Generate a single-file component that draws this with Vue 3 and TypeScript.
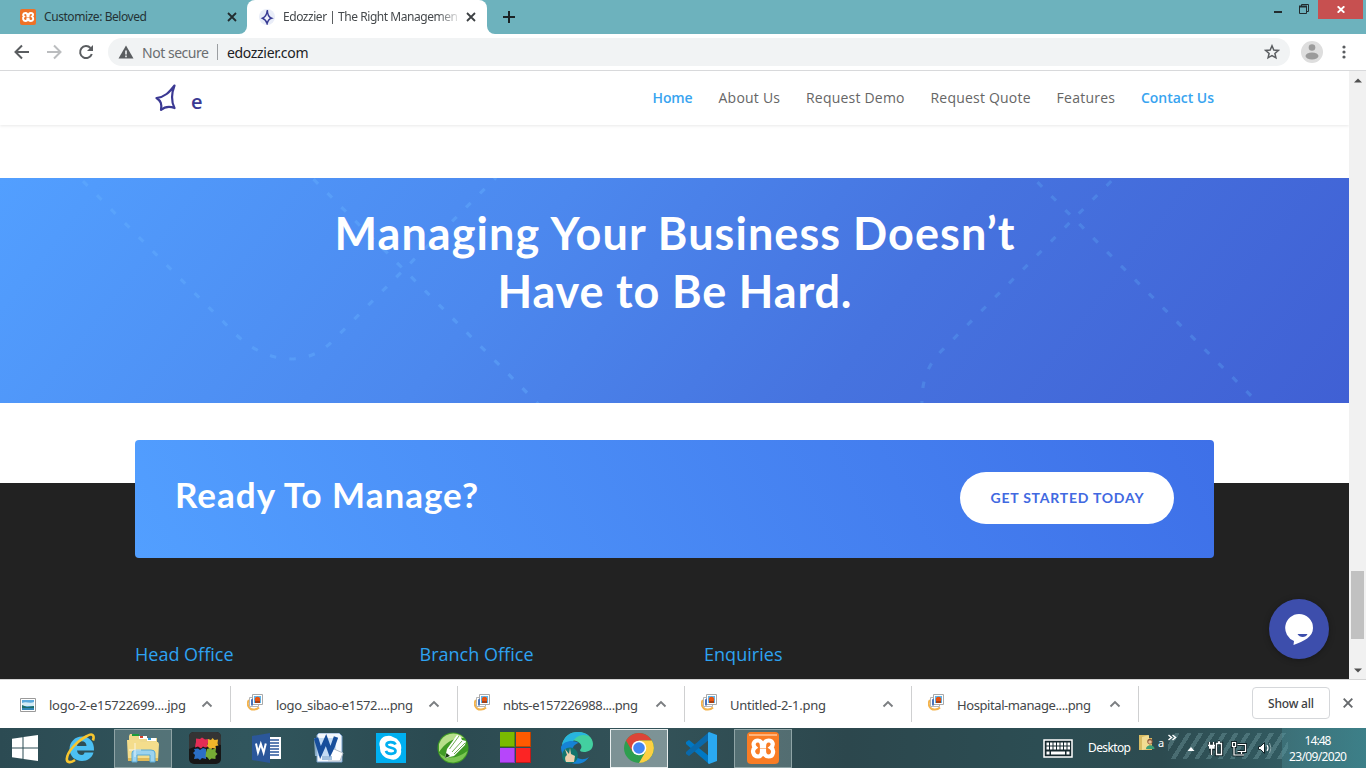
<script setup lang="ts">
interface NavItem { label: string; width: number; active?: boolean }
interface Download { name: string; width: number; kind: 'jpg' | 'png' }

const nav: NavItem[] = [
  { label: 'Home', width: 40, active: true },
  { label: 'About Us', width: 61.5 },
  { label: 'Request Demo', width: 98.5 },
  { label: 'Request Quote', width: 100 },
  { label: 'Features', width: 58.5 },
  { label: 'Contact Us', width: 73, active: true },
]

const downloads: Download[] = [
  { name: 'logo-2-e15722699....jpg', width: 137, kind: 'jpg' },
  { name: 'logo_sibao-e1572....png', width: 137, kind: 'png' },
  { name: 'nbts-e157226988....png', width: 135, kind: 'png' },
  { name: 'Untitled-2-1.png', width: 96, kind: 'png' },
  { name: 'Hospital-manage....png', width: 134, kind: 'png' },
]

const offices = [
  { label: 'Head Office', width: 98.5 },
  { label: 'Branch Office', width: 114 },
  { label: 'Enquiries', width: 78.5 },
]

// Spreads a label's letters so that it takes the given width in pixels.
const vFit = {
  mounted(el: HTMLElement, binding: { value: number }) {
    const range = document.createRange()
    range.selectNodeContents(el)
    el.style.letterSpacing = '0.001px'
    const natural = range.getBoundingClientRect().width
    const count = (el.textContent ?? '').trim().length
    const gap = (binding.value - natural) / Math.max(1, count - 1)
    el.style.letterSpacing = `${gap.toFixed(3)}px`
    el.style.marginRight = `${(-gap).toFixed(3)}px`
  },
}
</script>

<template>
  <div class="screen">
    <div class="tabs">
      <div class="tab idle">
        <svg class="fav" width="16" height="16" viewBox="0 0 32 32">
          <rect width="32" height="32" rx="4" fill="#ee7227" />
          <path d="M11 8c-5 0-6 5-3 7-4 3-1 9 3 9 3 0 4-2 4-5h2c0 3 2 5 5 5 5 0 6-6 2-9 4-3 2-7-2-7-3 0-5 2-5 6h-2c0-4-1-6-4-6z" fill="none" stroke="#fff" stroke-width="4" />
        </svg>
        <span v-fit="103" class="title">Customize: Beloved</span>
        <svg class="x" width="10" height="10" viewBox="0 0 10 10"><path d="M1 1l8 8M9 1L1 9" stroke="#222c2f" stroke-width="1.8" /></svg>
      </div>
      <div class="tab active">
        <svg class="fav" width="16" height="16" viewBox="0 0 16 16">
          <circle cx="8" cy="8" r="8" fill="#e9edf8" />
          <path d="M8.300 1C8.400 5 9.500 8 12.500 9.200c-2.700.8-3.700 2.600-4.400 5.300C7.200 11.700 6 10.200 3.500 9.200 6.200 8 8 5 8.300 1z" fill="#eef0fa" stroke="#373a93" stroke-width="1.500" />
        </svg>
        <span class="clip"><span v-fit="175" class="title">Edozzier | The Right Managemen</span></span>
        <svg class="x" width="10" height="10" viewBox="0 0 10 10"><path d="M1 1l8 8M9 1L1 9" stroke="#3c4043" stroke-width="1.8" /></svg>
      </div>
      <svg class="plus" width="12" height="12" viewBox="0 0 12 12"><path d="M6 0v12M0 6h12" stroke="#1b2325" stroke-width="2" /></svg>
      <div class="window-buttons">
        <svg width="52" height="19" viewBox="0 0 52 19">
          <path d="M9 12h8" stroke="#222c2f" stroke-width="2" />
          <path d="M34.500 6.500h7v7h-7zM36.500 6V4.500h7v7H42" fill="none" stroke="#222c2f" />
          <path d="M34 6.500h8" stroke="#222c2f" stroke-width="2" />
        </svg>
        <div class="close">
          <svg width="8" height="7" viewBox="0 0 8 7"><path d="M.7 .3l6.600 6.400M7.300 .3L.7 6.700" stroke="#fff" stroke-width="1.900" /></svg>
        </div>
      </div>
    </div>

    <div class="toolbar">
      <svg width="108" height="36" viewBox="0 0 108 36" fill="none" stroke-width="2">
        <path d="M29 18H16.500M22 11.500L15.500 18l6.500 6.500" stroke="#5a5d60" />
        <path d="M47 18h12.500M54 11.500l6.500 6.500-6.500 6.500" stroke="#bbbdbf" />
        <path d="M90.500 14A6 6 0 1 0 91.800 20" stroke="#5a5d60" />
        <path d="M93 11v6h-6z" fill="#5a5d60" />
      </svg>
      <div class="omnibox">
        <svg width="16" height="14" viewBox="0 0 16 14"><path d="M8 .5L15.500 13.500H.5z" fill="#5a5d60" /><path d="M8 5.500v4M8 10.500v1.700" stroke="#f1f3f4" stroke-width="1.600" /></svg>
        <span v-fit="67" class="insecure">Not secure</span>
        <i class="sep"></i>
        <span v-fit="81.5" class="url">edozzier.com</span>
        <svg class="star" width="16" height="16" viewBox="0 0 16 16"><path d="M8 1.800l1.800 4.200 4.500.4-3.400 3 1 4.400L8 11.500l-3.900 2.300 1-4.400-3.400-3 4.500-.4z" fill="none" stroke="#5a5d60" stroke-width="1.500" /></svg>
      </div>
      <svg class="avatar" width="22" height="22" viewBox="0 0 22 22"><circle cx="11" cy="11" r="11" fill="#dedede" /><circle cx="11" cy="6.500" r="3.300" fill="#9b9b9b" /><ellipse cx="11" cy="15" rx="6.500" ry="3.500" fill="#9b9b9b" /></svg>
      <svg class="dots" width="4" height="14" viewBox="0 0 4 14" fill="#5a5d60"><circle cx="2" cy="2" r="1.600" /><circle cx="2" cy="7" r="1.600" /><circle cx="2" cy="12" r="1.600" /></svg>
    </div>

    <div class="viewport">
      <main class="page">
        <header class="site-header">
          <div class="logo">
            <svg width="24" height="30" viewBox="0 0 24 30">
              <path d="M20.500 2.500C15 9.500 11 14 2.500 15 7 18 8 21 7 27 11 23.500 15 23 20.500 25 17 18 17.500 10 20.500 2.500z" fill="none" stroke="#3b3993" stroke-width="2.200" stroke-linejoin="round" />
            </svg>
            <span>e</span>
          </div>
          <nav>
            <a v-for="item in nav" :key="item.label" :class="{ on: item.active }" v-fit="item.width">{{ item.label }}</a>
          </nav>
        </header>

        <section class="hero">
          <svg class="trail" width="1349" height="225" viewBox="0 178 1349 225" fill="none" stroke-width="3.200">
            <g stroke="#66b2ff" stroke-opacity=".4">
              <path d="M83 181.200L236 334.500C268 365 308 367 333 340.500L496 177.500" stroke-dasharray="6.500 13.250" />
              <path d="M313.500 179.200L540 405.700" stroke-dasharray="6.500 13.200" />
            </g>
            <g stroke="#5fa9f7" stroke-opacity=".33">
              <path d="M1037.500 182.200L1252 396.700" stroke-dasharray="6.500 13.200" />
              <path d="M1111.200 181.200L943 349.400C930 362 921 378 922 405" stroke-dasharray="6.500 13.200" />
            </g>
          </svg>
          <h1><span v-fit="680">Managing Your Business Doesn’t</span><span v-fit="354">Have to Be Hard.</span></h1>
        </section>

        <section class="footer">
          <div class="cta">
            <h2 v-fit="303">Ready To Manage?</h2>
            <button><span v-fit="153">GET STARTED TODAY</span></button>
          </div>
          <div class="offices">
            <h4 v-for="o in offices" :key="o.label"><span v-fit="o.width">{{ o.label }}</span></h4>
          </div>
        </section>

        <div class="chat">
          <svg width="30" height="32" viewBox="0 0 30 32">
            <path d="M15 1a14 14 0 0 1 14 14c0 9-9 13-19.500 17l.5-4A14 14 0 0 1 15 1z" fill="#fff" />
            <path d="M13.500 21h10c-1.500 4-8 4-10 0z" fill="#3d4eac" />
          </svg>
        </div>
      </main>
      <div class="scrollbar">
        <svg width="8" height="5" viewBox="0 0 8 5"><path d="M0 4.500L4 .5l4 4z" fill="#505050" /></svg>
        <div class="thumb"></div>
        <svg width="8" height="5" viewBox="0 0 8 5"><path d="M0 .5l4 4 4-4z" fill="#505050" /></svg>
      </div>
    </div>

    <div class="downloads">
      <div v-for="d in downloads" :key="d.name" class="download">
        <svg v-if="d.kind === 'jpg'" class="file" width="16" height="16" viewBox="0 0 16 16">
          <path d="M.5 1.500h15v13H.5z" fill="#fff" stroke="#9a9a9a" /><path d="M2 3h12v10H2z" fill="#5aa9dc" /><path d="M2 6c4-2 8 1 12-1v4H2z" fill="#d4ecf5" /><path d="M2 8l5 2 7-1v4H2z" fill="#1c6d68" /><path d="M2 11h12v2H2z" fill="#3285b5" />
        </svg>
        <svg v-else class="file png" width="16" height="17" viewBox="0 0 16 17">
          <path d="M2 6C-1 10 2 16 7 15.500c2 0 4-1 5-2" fill="none" stroke="#f3b34d" stroke-width="2" />
          <path d="M2.500 3.500h9v9h-9z" fill="#fff" stroke="#b5b5b5" /><path d="M5.500 .5h10v10h-10z" fill="#fff" stroke="#a9a9a9" />
          <path d="M7 2h7v7H7z" fill="#5fb6ee" /><path d="M4 5.500l2-1v7H4z" fill="#4b75bb" /><circle cx="10.500" cy="5.500" r="2.700" fill="#e8530f" /><path d="M8 7h5v2H8z" fill="#a34118" />
        </svg>
        <span v-fit="d.width" class="name">{{ d.name }}</span>
        <svg class="caret" width="12" height="8" viewBox="0 0 12 8"><path d="M1.500 6.500L6 2l4.500 4.500" fill="none" stroke="#7b7e81" stroke-width="1.900" /></svg>
      </div>
      <div class="show-all"><span v-fit="46">Show all</span></div>
      <svg class="dismiss" width="10" height="10" viewBox="0 0 10 10"><path d="M.7 .7l8.600 8.600M9.300 .7L.7 9.300" stroke="#66696c" stroke-width="1.900" /></svg>
    </div>

    <div class="taskbar">
      <div class="start">
        <svg width="26" height="26" viewBox="0 0 26 26" fill="#fff"><path d="M0 3.700L10.500 2.200v10.300H0zM11.500 2L26 0v12.500H11.500zM0 13.500h10.500v10.300L0 22.300zM11.500 13.500H26V26l-14.500-2z" /></svg>
      </div>
      <div class="cell">
        <svg width="32" height="32" viewBox="0 0 32 32">
          <path d="M19.500 20.500h9C27 26 22.500 29 17 29 10 29 4.500 24 4.500 17S10 4.500 17 4.500 29.500 9.500 29 18.500H12c.3 3 2.500 4.500 5 4.500 1.500 0 2.200-1 2.500-2.500zM12 14h9.500c0-3-2-4.700-4.700-4.700S12.300 11 12 14z" fill="#4cc0f3" fill-rule="evenodd" />
          <path d="M28 8.500c2-5.500-1-7.500-6-4.500C12 9 2 20 1.800 27c-.1 4 4.200 4 8.200 1" fill="none" stroke="#f7c62f" stroke-width="2.600" />
        </svg>
      </div>
      <div class="cell open">
        <svg width="32" height="30" viewBox="0 0 32 30">
          <path d="M2 3l1-2h8l1 2h6l1 2h11v6H2z" fill="#efd98b" /><path d="M5 1h7v2H5z" fill="#1b9c3b" /><path d="M12 3h8v3h-8z" fill="#fff" /><path d="M13 3h3v2h-3z" fill="#d7402b" /><path d="M20 5h9v3h-9z" fill="#fff" /><path d="M21 5h3v2h-3z" fill="#2d9bd9" />
          <path d="M0 7h12l2 2h17l1 2-1 17H1z" fill="#f4dd8c" /><path d="M1 25h30v3H1z" fill="#dfb958" />
          <path d="M5 29V20q0-3 4-3h15q4 0 4 3v9h-5v-7H10v7z" fill="#9bd3ef" stroke="#5aa9d2" />
          <path d="M8 10v14M2 17h12" stroke="#fff" stroke-opacity=".7" />
        </svg>
      </div>
      <div class="cell">
        <svg width="32" height="32" viewBox="0 0 32 32">
          <rect width="32" height="32" rx="5" fill="#171717" /><path d="M0 5q0-5 5-5h22q5 0 5 5v8Q16 10 0 17z" fill="#343434" />
          <path d="M7 6.500l4 .5 2-1.500 3 2 3-.5v4l-1 2 1 2-3 .5-2-1-2 2-3-2-3 1 .5-3.500L7 10z" fill="#e52d55" />
          <path d="M19 7l3 1 1.500-2 2 2 3.500-.500-.5 4 1 2-3 .5.5 3-3.500-1-2 1.500-2-2-1.500-2 1-2z" fill="#f0b62a" />
          <path d="M5 17l4-.5L11 18l3-2 3 1v3l2 2-2 2v3l-4-1-2 2-2-1.500-4 .5 1-4-2-2 2-2z" fill="#2b6fc5" />
          <path d="M18 17l3-1 2 1.500 4-1-.5 3.500 2 2-2 2 0 3-4-.500-2 1.500-2-2.500-2-1 .500-4z" fill="#76ad35" />
        </svg>
      </div>
      <div class="cell">
        <svg width="30" height="30" viewBox="0 0 30 30">
          <path d="M16 4h13v22H16z" fill="#fff" /><path d="M18 7h9M18 10h9M18 13h9M18 16h9M18 19h9M18 22h9" stroke="#2b579a" stroke-width="1.300" />
          <path d="M0 3l18-3v30L0 27z" fill="#2b579a" /><path d="M4 10.500l2 9 2.800-8.500 2.800 8.500 2.200-9" fill="none" stroke="#fff" stroke-width="2" />
        </svg>
      </div>
      <div class="cell">
        <svg width="30" height="30" viewBox="0 0 30 30">
          <path d="M5 0h20l3 3v26H3V2z" fill="#f4f8fd" stroke="#79a0cc" /><path d="M0 5h22v18H1z" fill="#aecff0" fill-opacity=".7" />
          <path d="M2 5l4.500 14.500L12 7l4.500 12.500L22 4" fill="none" stroke="#174e9b" stroke-width="4.500" /><path d="M20 16l9 4-3 8H14" fill="#fff" stroke="#b3bdc9" /><path d="M8 24h10M8 26h10" stroke="#4f86bf" />
        </svg>
      </div>
      <div class="cell">
        <svg width="30" height="30" viewBox="0 0 30 30">
          <rect width="30" height="30" fill="#00aff0" /><path d="M11 3a8 8 0 0 1 6 1 11 11 0 0 1 8 13 8 8 0 0 1-11 9A11 11 0 0 1 4 14 8 8 0 0 1 11 3z" fill="#fff" />
          <path d="M19.500 11.500c-1-3-9-3.500-9 .3 0 4 9 2 9 6 0 4-8.500 4-9.500 0" fill="none" stroke="#00aff0" stroke-width="2.700" />
        </svg>
      </div>
      <div class="cell">
        <svg width="32" height="32" viewBox="0 0 32 32">
          <circle cx="16" cy="16" r="15.500" fill="#3f9a25" /><path d="M2 12A15 15 0 0 1 27 6Q12 5 2 20z" fill="#b7df8b" /><path d="M2 21Q14 31 30.500 19A15 15 0 0 1 2 21z" fill="#7cc653" />
          <path d="M8 26l2-9L20 3l3.500 1.500L25 8l4 1-1 4L17 24z" fill="#fff" /><path d="M12.500 17L22 4M15 20l10-11M17 22l11-11" stroke="#6fae50" /><path d="M8 26l1.500-5 3.500 3z" fill="#183c13" />
        </svg>
      </div>
      <div class="cell">
        <svg width="31" height="31" viewBox="0 0 31 31">
          <path d="M0 0h15v15H0z" fill="#7aba00" /><path d="M16 0h15v15H16z" fill="#ff5a00" /><path d="M0 16h15v15H0z" fill="#b646fa" /><path d="M16 16h15v15H16z" fill="#fc2424" />
          <path d="M0 14.500h14.500V0M16 14.500h14.500V0M0 30.500h14.500V16M16 30.500h14.500V16" fill="none" stroke="#000" stroke-opacity=".25" />
        </svg>
      </div>
      <div class="cell">
        <svg width="32" height="32" viewBox="0 0 32 32">
          <path d="M1 13C3 4 9 0 17 0c9 0 15 6 15 12 0 6-5 8-9 8-3 0-4-1-4-2 1-1 2-3 1-5-2-5-12-7-19 0z" fill="#43cfa0" /><path d="M1 13C3 4 9 0 17 0c4 0 8 1 11 4-10-3-14 2-17 7-4-1-7 0-10 2z" fill="#28b4df" />
          <path d="M0 15c2-6 12-8 18-4-6 1-8 7-5 12 3 4 9 6 15 2-5 8-16 9-22 3-4-3-6-8-6-13z" fill="#1683d5" />
          <circle cx="9" cy="23.500" r="8" fill="#14756d" /><path d="M5 30c-2-5 0-6 1-7l-2-6 4 5 1-6 1 6 4 2-1 6z" fill="#ecd0ad" />
        </svg>
      </div>
      <div class="cell open chrome">
        <svg width="30" height="30" viewBox="0 0 30 30">
          <circle cx="15" cy="15" r="15" fill="#2e9e4f" /><path d="M15 7.500h12.900A15 15 0 0 0 2 7.500l6.500 11.300z" fill="#dc4437" /><path d="M15 7.500h12.900A15 15 0 0 1 15 30l6.500-11.300z" fill="#fdd042" />
          <circle cx="15" cy="15" r="7.300" fill="#fff" /><circle cx="15" cy="15" r="5.800" fill="#4285f4" />
        </svg>
      </div>
      <div class="cell">
        <svg width="32" height="32" viewBox="0 0 32 32">
          <path d="M1 10l3-2 21 17-1 7L1 12z" fill="#0078c4" /><path d="M1 22l3 2L25 7l-1-7L1 20z" fill="#0a69ab" /><path d="M24 0l8 3v26l-8 3-1-1V1z" fill="#2aa9f2" />
        </svg>
      </div>
      <div class="cell open">
        <svg width="32" height="32" viewBox="0 0 32 32">
          <rect width="32" height="32" rx="4" fill="#f97c24" /><path d="M2 2h28v2H2z" fill="#ffb47b" />
          <path d="M11 8.500c-4.500 0-5.500 4.500-3 7-3.500 2.500-2 9 3 9 3 0 4-2.500 4-5.500h2c0 3 1.500 5.500 4.500 5.500 5 0 6-6.500 2.500-9 3-2.500 2-7-2.500-7-3.500 0-4.500 2.500-4.500 6h-2c0-3.500-1-6-4-6z" fill="none" stroke="#fff" stroke-width="4.200" />
        </svg>
      </div>
      <div class="tray">
        <svg class="keyboard" width="30" height="20" viewBox="0 0 30 20"><path d="M1 1h28v17H1z" fill="#16292e" stroke="#fff" stroke-width="1.500" /><path d="M3.500 5h24M3.500 9h24" stroke="#fff" stroke-width="3" stroke-dasharray="2.500 1" /><path d="M3.500 14h3M8 14h14M23.500 14h3" stroke="#fff" stroke-width="3" /></svg>
        <span v-fit="43" class="desk">Desktop</span>
        <svg class="folder" width="16" height="17" viewBox="0 0 16 17"><path d="M0 1h9v3h4v12H0z" fill="#d8bc63" /><path d="M3 3l7-2v14l-7 1z" fill="#f1dc92" /><circle cx="11" cy="7.500" r="2.700" fill="#8a5536" /><circle cx="11" cy="8" r="1.800" fill="#e9bd94" /><path d="M7 15c0-5 8.500-5 8.500 0z" fill="#3c9e77" /></svg>
        <span class="a">a</span>
        <svg class="more" width="10" height="8" viewBox="0 0 10 8"><path d="M1.500 1l3 2.500-3 2.500M5.500 1l3 2.500-3 2.500" fill="none" stroke="#fff" stroke-width="1.500" /></svg>
        <svg class="status" width="88" height="18" viewBox="0 0 88 18" fill="none" stroke="#fff">
          <path d="M.5 12h7L4 8z" fill="#fff" stroke="none" />
          <path d="M22.500 3v3M26.500 3v3M21 6.500h7M22 7.500h5v2h-5M24.500 9v7M29.500 4.500h5v11h-5zM31 3h2" stroke="#132428" stroke-width="3.500" /><path d="M22.500 3v3M26.500 3v3M21 6.500h7M22 8h5v1h-5M24.500 9v7M29.500 4.500h5v11h-5zM31 3h2" stroke-width="1.300" />
          <path d="M50.500 5.500h8v7h-8M47 8v8h10M45.500 3.500h3v4h-3zM54.500 13v2" stroke="#132428" stroke-width="3" /><path d="M50.500 5.500h8v7h-8M47 8v8h10M45.500 3.500h3v4h-3zM54.500 13v2" stroke-width="1.200" />
          <path d="M71.500 7.500h2l4-4v11l-4-4h-2z" fill="#fff" stroke="#132428" /><path d="M80 6q2 3 0 6" stroke-width="1.200" /><path d="M82.500 4q3 5 0 10" stroke="#8ca8ac" />
        </svg>
        <div class="clock"><span v-fit="27">14:48</span><span v-fit="58">23/09/2020</span></div>
      </div>
    </div>
  </div>
</template>

<style>
html, body { margin: 0; overflow: hidden; }
</style>

<style scoped>
.screen { width: 1366px; height: 768px; display: flex; flex-direction: column; overflow: hidden; font-family: "Noto Sans", "Open Sans", sans-serif; background: #fff; }
.screen *, .screen { box-sizing: border-box; }
svg { display: block; flex: none; }
span { white-space: nowrap; }

.tabs { height: 34px; flex: none; display: flex; background: linear-gradient(#fff, #fff) 239px 100% / 256px 8px no-repeat #6db2bd; }
.tab { height: 34px; display: flex; align-items: center; font-size: 12px; }
.idle { width: 247px; padding-left: 20px; border-radius: 0 0 8px 0; color: #243235; background: #6db2bd; }
.active { width: 240px; padding-left: 12px; border-radius: 8px 8px 0 0; background: linear-gradient(#fff, #fff); color: #45494c; }
.title { line-height: 16px; margin-left: 8px; }
.clip { width: 183px; display: flex; -webkit-mask: linear-gradient(90deg, #000 162px, rgba(0, 0, 0, .15) 183px); mask: linear-gradient(90deg, #000 162px, rgba(0, 0, 0, .15) 183px); }
.tab .x { margin-left: auto; margin-right: 10px; }
.active .x { margin-right: 11px; }
.plus { padding: 11px 16px; width: 44px; height: 34px; background: #6db2bd; border-radius: 0 0 0 8px; }
.window-buttons { margin-left: auto; margin-right: 3px; display: flex; align-items: flex-start; }
.window-buttons > svg { margin-right: 1px; }
.close { width: 45px; height: 19px; background: #c75050; display: grid; place-items: center; }

.toolbar { height: 37px; flex: none; display: flex; background: #fff; border-bottom: 1px solid #d8d9db; }
.omnibox { width: 1182px; height: 28px; margin-top: 4px; border-radius: 14px; background: #f1f3f4; display: flex; align-items: center; padding: 0 10px; font-size: 14px; }
.insecure { margin-left: 8px; color: #6a6d70; }
.sep { width: 1px; height: 16px; margin: 0 9px 0 8px; background: #9b9ea1; }
.url { color: #202124; }
.star { margin-left: auto; }
.avatar { margin: 7px 0 0 11px; }
.dots { margin: 11px 0 0 19px; }

.viewport { height: 609px; flex: none; display: flex; border-bottom: 1px solid #d5d5d5; }
.page { position: relative; width: 1349px; height: 608px; overflow: hidden; background: #fff; }
.site-header { height: 54px; display: flex; justify-content: space-between; padding: 0 135px 0 154px; box-shadow: 0 1px 3px rgba(0, 0, 0, .09); }
.logo { display: flex; padding-top: 12px; color: #3b3993; }
.logo span { font: 600 20px/26px "Open Sans", sans-serif; margin: 6px 0 0 13px; }
nav { display: flex; gap: 26px; font: 500 14px/20px "Open Sans", sans-serif; padding-top: 17px; color: #666; }
nav a { white-space: nowrap; }
nav .on { color: #38a4f0; font-weight: 600; }
.hero { position: relative; height: 225px; margin-top: 53px; background: linear-gradient(128deg, #529fff 0%, #4c88ee 38%, #4673df 65%, #4060d4 100%); }
.trail { position: absolute; left: 0; top: 0; }
h1 { position: relative; margin: 0; padding-top: 26px; display: flex; flex-direction: column; align-items: center; color: #fff; font: 700 45px/58px Lato, sans-serif; }
.footer { margin-top: 80px; height: 196px; background: #222; padding: 0 135px; }
.cta { position: relative; top: -43px; height: 118px; padding: 0 40px 2px; border-radius: 4px; display: flex; align-items: center; justify-content: space-between; background: linear-gradient(64deg, #529fff 0%, #3e70e8 100%); }
h2 { margin: 0; padding-bottom: 8px; color: #fff; font: 700 35px/44px Lato, sans-serif; white-space: nowrap; }
button { width: 214px; height: 52px; border: 0; padding: 0 0 1px; border-radius: 26px; background: #fff; color: #4169e1; font: 700 14px/20px Lato, sans-serif; }
.offices { display: grid; grid-template-columns: 284.500px 284.500px 1fr; margin-top: 41px; }
h4 { margin: 0; color: #2ea3f2; font: 400 18px/24px "Open Sans", sans-serif; }
.chat { position: absolute; left: 1269px; top: 528px; width: 60px; height: 60px; border-radius: 50%; background: #3d4eac; box-shadow: 0 1px 6px rgba(0, 0, 0, .3); padding: 14px 0 0 15px; }
.scrollbar { width: 17px; height: 608px; padding: 7px 2px 6px; background: #f1f1f1; display: flex; flex-direction: column; align-items: center; }
.thumb { width: 13px; height: 68px; margin: auto 0 29px; background: #c1c1c1; }

.downloads { height: 48px; flex: none; display: flex; align-items: center; background: #fff; }
.download { width: 227px; height: 36px; display: flex; align-items: center; padding: 2px 17px 0 16px; border-right: 1px solid #cfd0d1; font-size: 13px; color: #44474a; }
.download:first-child { width: 231px; padding-left: 20px; }
.file { margin-bottom: 1px; }
.file.png { margin-bottom: 5px; }
.name { margin-left: 13px; }
.caret { margin-left: auto; margin-bottom: 3px; }
.show-all { width: 78px; height: 32px; margin: 0 13px 2px auto; border: 1px solid #d5d7da; border-radius: 4px; display: grid; place-items: center; font-size: 12px; font-weight: 500; color: #3c4043; }
.dismiss { margin: 0 13px 2px 0; }

.taskbar { height: 40px; flex: none; display: flex; background: linear-gradient(90deg, #2c4b53, #31565d 18%, #2b4a51 32%, #335258 48%, #2c474d 62%, #2c4d53 76%, #2d4b50 85%, #35656c); color: #fff; }
.start { width: 50px; display: flex; align-items: center; padding: 0 0 1px 12px; }
.cell { width: 58px; height: 39px; margin: 1px 2px 0; display: grid; place-items: center; }
.cell > svg { margin-bottom: 2px; }
.open { background: rgba(155, 180, 180, .34); border: 1px solid #8fa4a6; }
.chrome { background: rgba(200, 212, 212, .5); border-color: #e8eeee; }
.tray { flex: 1; display: flex; align-items: flex-start; padding-left: 249px; background: repeating-linear-gradient(122deg, transparent 0 6px, rgba(145, 190, 195, .28) 6px 10px) 374px 5px / 120px 26px no-repeat; font-size: 12px; line-height: 16px; }
.keyboard { margin: 11px 0 0 0; }
.desk { padding: 12px 0 0 15px; }
.folder { margin: 6px 0 0 8px; }
.a { font-size: 11px; padding: 7px 0 0 3px; }
.more { margin: 6px 0 0 3px; }
.status { margin: 11px 0 0 10px; }
.clock { width: 84px; height: 40px; margin-left: auto; padding: 5px 12px 0 0; background: linear-gradient(90deg, rgba(80, 150, 160, .35), rgba(65, 145, 155, .6)); display: flex; flex-direction: column; align-items: center; }
</style>
